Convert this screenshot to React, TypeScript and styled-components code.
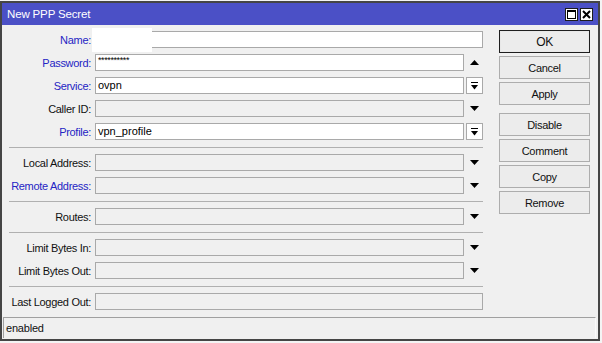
import React from "react";
import styled, { createGlobalStyle } from "styled-components";

const GlobalStyle = createGlobalStyle`
    html, body {
        margin: 0;
        padding: 0;
        background: #f4f4f4;
    }
    body {
        font-family: "Liberation Sans", Arial, sans-serif;
        font-size: 11px;
    }
`

const Window = styled.div`
    box-sizing: border-box;
    margin-top: 1px;
    width: 600px;
    height: 340px;
    border: 2px solid #454545;
    background: #f0f0f0;
    display: flex;
    flex-direction: column;
`

const TitleBar = styled.div`
    height: 22px;
    background: #4b50c6;
    color: #fff;
    display: flex;
    align-items: center;
    padding: 0 5px 0 5px;
    font-size: 11.5px;
    letter-spacing: -0.15px;
    .caption{
        flex: 1;
    }
`

const TitleButton = styled.div`
    box-sizing: border-box;
    width: 13px;
    height: 13px;
    margin-left: 2px;
    background: #fff;
    border: 1px solid #1c1c1c;
    display: flex;
    align-items: center;
    justify-content: center;
`

const Body = styled.div`
    flex: 1;
    display: flex;
    padding-top: 5px;
`

const Form = styled.div`
    width: 481px;
    padding-top: 1px;
    display: flex;
    flex-direction: column;
`

const Row = styled.div`
    position: relative;
    display: flex;
    align-items: center;
    height: 17px;
    & + & {
        margin-top: 6px;
    }
`

const Label = styled.div<{ $blue?: boolean }>`
    width: 89px;
    margin-right: 4px;
    text-align: right;
    white-space: nowrap;
    letter-spacing: -0.3px;
    color: ${p => p.$blue ? "#2424c4" : "#111"};
`

const Field = styled.div<{ $white?: boolean }>`
    box-sizing: border-box;
    flex: 1;
    height: 17px;
    border: 1px solid #a9a9a9;
    background: ${p => p.$white ? "#fff" : "#f0f0f0"};
    padding: 1px 0 0 2px;
    font-size: 11px;
    color: #000;
    white-space: nowrap;
    overflow: hidden;
    &.secret{
        font-size: 9px;
        line-height: 8px;
        letter-spacing: -0.4px;
    }
`

const Arrow = styled.div<{ $boxed?: boolean }>`
    box-sizing: border-box;
    width: 17px;
    height: 17px;
    margin-left: 2px;
    display: flex;
    align-items: center;
    justify-content: center;
    border: 1px solid ${p => p.$boxed ? "#a9a9a9" : "transparent"};
    background: ${p => p.$boxed ? "#fff" : "transparent"};
`

const Redacted = styled.div`
    position: absolute;
    left: 90px;
    top: -3px;
    width: 60px;
    height: 24px;
    background: #fff;
`

const Separator = styled.div`
    height: 1px;
    margin: 7px 0 6px 7px;
    background: #b0b0b0;
`

const Buttons = styled.div`
    margin-left: 16px;
    width: 91px;
    display: flex;
    flex-direction: column;
`

const Button = styled.div<{ $default?: boolean; $gap?: number }>`
    box-sizing: border-box;
    height: 23px;
    margin-top: ${p => p.$gap ?? 3}px;
    border: 1px solid ${p => p.$default ? "#1e1e1e" : "#adadad"};
    box-shadow: ${p => p.$default ? "inset 0 0 0 1px #e8e8e8" : "none"};
    background: #ececec;
    display: flex;
    align-items: center;
    justify-content: center;
    letter-spacing: -0.3px;
    color: #111;
    font-size: ${p => p.$default ? "12px" : "11px"};
`

const StatusBar = styled.div`
    box-sizing: border-box;
    height: 21px;
    margin: 0 2px 1px 1px;
    border-top: 1px solid #a0a0a0;
    border-left: 1px solid #a0a0a0;
    border-right: 1px solid #fafafa;
    display: flex;
    align-items: center;
    padding-left: 2px;
    color: #111;
    letter-spacing: -0.2px;
`

function Down() {
    return <svg width="9" height="5" viewBox="0 0 9 5"><path d="M0 0h9L4.5 5z" fill="#000" /></svg>
}

function Up() {
    return <svg width="9" height="5" viewBox="0 0 9 5"><path d="M0 5h9L4.5 0z" fill="#000" /></svg>
}

function DropDown() {
    return <svg width="7" height="8" viewBox="0 0 7 8"><rect x="0" y="0" width="7" height="1" fill="#000" /><path d="M0 3h7L3.5 7.5z" fill="#000" /></svg>
}

type FieldRow = {
    label: string,
    blue?: boolean,
    value?: string,
    white?: boolean,
    arrow?: "up" | "down" | "drop" | "none",
    secret?: boolean
}

const sections: FieldRow[][] = [
    [
        { label: "Name:", blue: true, white: true, arrow: "none" },
        { label: "Password:", blue: true, white: true, value: "**********", arrow: "up", secret: true },
        { label: "Service:", blue: true, white: true, value: "ovpn", arrow: "drop" },
        { label: "Caller ID:", arrow: "down" },
        { label: "Profile:", blue: true, white: true, value: "vpn_profile", arrow: "drop" },
    ],
    [
        { label: "Local Address:", arrow: "down" },
        { label: "Remote Address:", blue: true, arrow: "down" },
    ],
    [
        { label: "Routes:", arrow: "down" },
    ],
    [
        { label: "Limit Bytes In:", arrow: "down" },
        { label: "Limit Bytes Out:", arrow: "down" },
    ],
    [
        { label: "Last Logged Out:", arrow: "none" },
    ],
]

export default function App() {
    return <>
        <GlobalStyle />
        <Window>
            <TitleBar>
                <span className="caption">New PPP Secret</span>
                <TitleButton>
                    <svg width="9" height="9" viewBox="0 0 9 9"><rect x="0.5" y="0.5" width="8" height="8" fill="none" stroke="#000" /><rect x="0" y="0" width="9" height="2" fill="#000" /></svg>
                </TitleButton>
                <TitleButton>
                    <svg width="9" height="9" viewBox="0 0 9 9"><path d="M1 1l7 7M8 1l-7 7" stroke="#000" strokeWidth="2" /></svg>
                </TitleButton>
            </TitleBar>
            <Body>
                <Form>
                    {sections.map((rows, i) => <React.Fragment key={i}>
                        {i > 0 && <Separator />}
                        <div>
                            {rows.map(r => <Row key={r.label}>
                                <Label $blue={r.blue}>{r.label}</Label>
                                <Field $white={r.white} className={r.secret ? "secret" : ""}>{r.value}</Field>
                                {r.arrow === "up" && <Arrow><Up /></Arrow>}
                                {r.arrow === "down" && <Arrow><Down /></Arrow>}
                                {r.arrow === "drop" && <Arrow $boxed><DropDown /></Arrow>}
                                {r.label === "Name:" && <Redacted />}
                            </Row>)}
                        </div>
                    </React.Fragment>)}
                </Form>
                <Buttons>
                    <Button $default $gap={0}>OK</Button>
                    <Button>Cancel</Button>
                    <Button>Apply</Button>
                    <Button $gap={8}>Disable</Button>
                    <Button>Comment</Button>
                    <Button>Copy</Button>
                    <Button>Remove</Button>
                </Buttons>
            </Body>
            <StatusBar>enabled</StatusBar>
        </Window>
    </>
}
